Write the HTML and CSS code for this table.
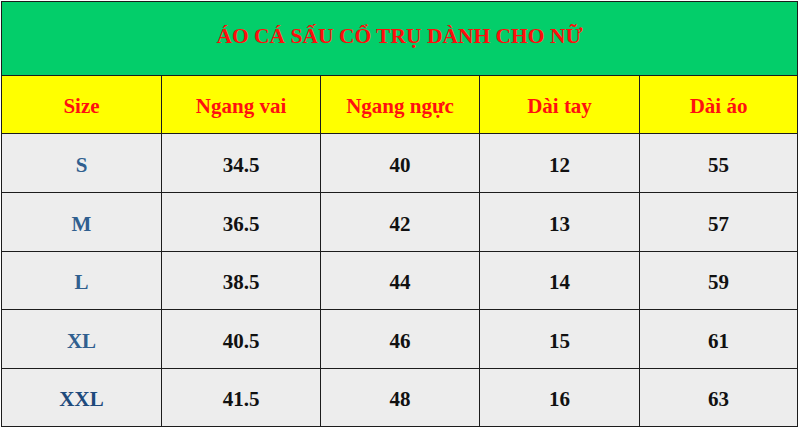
FILE: index.html
```html
<!DOCTYPE html>
<html lang="vi">
<head>
<meta charset="utf-8">
<title>Áo cá sấu cổ trụ dành cho nữ</title>
<link rel="stylesheet" href="styles.css">
</head>
<body>
<div class="sheet">
  <div class="cell title">ÁO CÁ SẤU CỔ TRỤ DÀNH CHO NỮ</div>
  <div class="cell head">Size</div>
  <div class="cell head">Ngang vai</div>
  <div class="cell head">Ngang ngực</div>
  <div class="cell head">Dài tay</div>
  <div class="cell head">Dài áo</div>

  <div class="cell size">S</div>
  <div class="cell num">34.5</div>
  <div class="cell num">40</div>
  <div class="cell num">12</div>
  <div class="cell num">55</div>

  <div class="cell size">M</div>
  <div class="cell num">36.5</div>
  <div class="cell num">42</div>
  <div class="cell num">13</div>
  <div class="cell num">57</div>

  <div class="cell size">L</div>
  <div class="cell num">38.5</div>
  <div class="cell num">44</div>
  <div class="cell num">14</div>
  <div class="cell num">59</div>

  <div class="cell size">XL</div>
  <div class="cell num">40.5</div>
  <div class="cell num">46</div>
  <div class="cell num">15</div>
  <div class="cell num">61</div>

  <div class="cell size dark">XXL</div>
  <div class="cell num">41.5</div>
  <div class="cell num">48</div>
  <div class="cell num">16</div>
  <div class="cell num">63</div>
</div>
</body>
</html>
```
FILE: styles.css
```css
html, body {
  margin: 0;
  padding: 0;
  background: #ffffff;
}

body {
  font-family: "Liberation Serif", "Times New Roman", serif;
  font-weight: bold;
  font-size: 21px;
}

.sheet {
  margin: 1px 0 0 1px;
  width: 797px;
  box-sizing: border-box;
  display: grid;
  grid-template-columns: 159px 158px 158px 159px 157px;
  grid-template-rows: 73px 57px 58px 58px 57px 58px 57px;
  gap: 1px;
  padding: 1px;
  background: #1c1c1c;
}

.cell {
  display: flex;
  align-items: center;
  justify-content: center;
  background: #ededed;
  color: #111111;
  line-height: 1;
  padding-top: 4px;
  box-sizing: border-box;
}

.title {
  grid-column: 1 / -1;
  background: #03ce6a;
  color: #ff0d0d;
  font-size: 21.5px;
  padding-top: 0;
  padding-bottom: 4px;
}

.head {
  background: #ffff00;
  color: #ff1010;
}

.size {
  color: #305f8f;
}

.size.dark {
  color: #1d4a7c;
}

.num {
  color: #111111;
}
```
